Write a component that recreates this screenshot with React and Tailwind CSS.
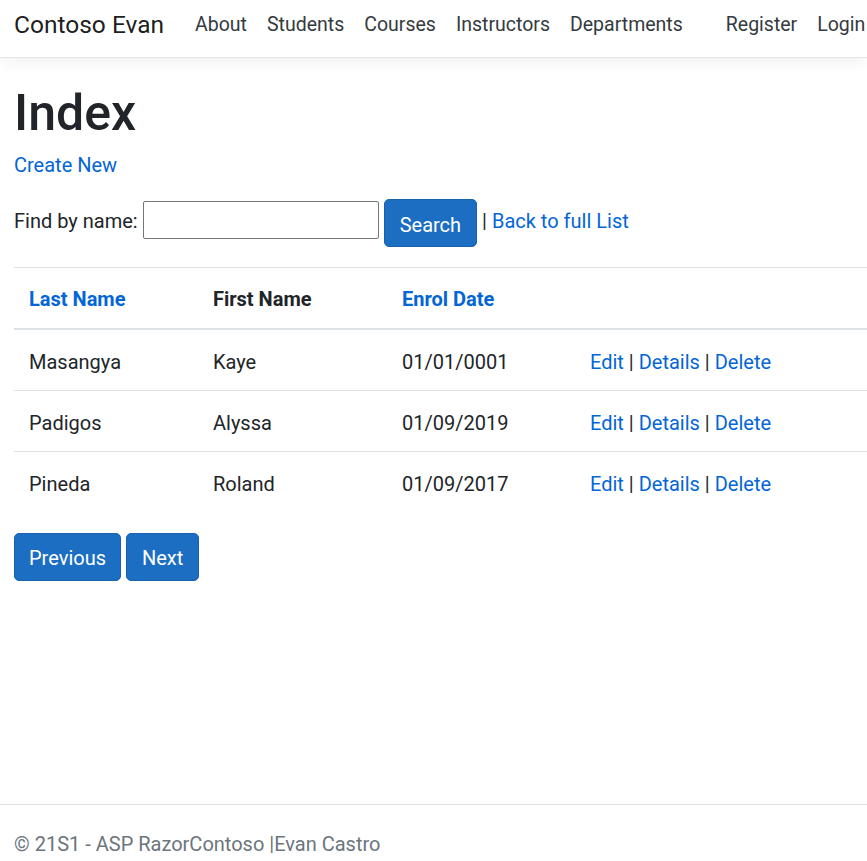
import React from 'react';

const students = [
  { last: 'Masangya', first: 'Kaye', date: '01/01/0001' },
  { last: 'Padigos', first: 'Alyssa', date: '01/09/2019' },
  { last: 'Pineda', first: 'Roland', date: '01/09/2017' },
];

const navLinks = ['About', 'Students', 'Courses', 'Instructors', 'Departments'];

const App = () => {
  return (
    <div className="min-h-[861px] w-full overflow-hidden flex flex-col bg-white text-[20px] leading-[30px] text-[#212529] font-['Segoe_UI',Roboto,'Liberation_Sans',sans-serif]">
      {/* Navbar */}
      <header className="h-[58px] shrink-0 border-b border-[#e5e5e5] bg-white shadow-[0_5px_15px_rgba(0,0,0,0.05)] flex items-center pl-[14px] pb-[8px] whitespace-nowrap">
        <a className="text-[24.5px] text-black/90 mr-[21px]">Contoso Evan</a>
        <ul className="flex text-[19.5px]">
          {navLinks.map((link) => (
            <li key={link}>
              <a className="px-[10px] text-[#343a40]">{link}</a>
            </li>
          ))}
        </ul>
        <ul className="flex ml-[23px] text-[19.5px]">
          <li><a className="px-[10px] text-[#343a40]">Register</a></li>
          <li><a className="px-[10px] text-[#343a40]">Login</a></li>
        </ul>
      </header>

      {/* Main content */}
      <main className="px-[14px] pt-[25px]">
        <h1 className="text-[50px] leading-[60px] font-medium mb-[7px]">Index</h1>
        <p className="mb-[19px]">
          <a className="text-[#0366d6]">Create New</a>
        </p>

        <form className="flex items-center h-[48px] mb-[20px] whitespace-nowrap">
          <span className="mb-[4px]">Find by name:</span>
          <input
            type="text"
            className="ml-[5px] mb-[6px] w-[236px] h-[38px] border border-[#767676] rounded-[2px] bg-white"
          />
          <button
            type="button"
            className="ml-[5px] h-[48px] px-[15px] pt-[3px] bg-[#1b6ec2] border border-[#1861ac] rounded-[5px] text-white"
          >
            Search
          </button>
          <span className="ml-[5px] mb-[4px]">
            | <a className="text-[#0366d6]">Back to full List</a>
          </span>
        </form>

        {/* Table */}
        <table className="w-[1000px] border-collapse mb-[21px]">
          <thead>
            <tr>
              <th className="w-[184px] text-left font-bold px-[15px] pt-[16px] pb-[14px] border-t border-b-2 border-[#dee2e6]">
                <a className="text-[#0366d6]">Last Name</a>
              </th>
              <th className="w-[189px] text-left font-bold px-[15px] pt-[16px] pb-[14px] border-t border-b-2 border-[#dee2e6]">
                First Name
              </th>
              <th className="w-[188px] text-left font-bold px-[15px] pt-[16px] pb-[14px] border-t border-b-2 border-[#dee2e6]">
                <a className="text-[#0366d6]">Enrol Date</a>
              </th>
              <th className="px-[15px] pt-[16px] pb-[14px] border-t border-b-2 border-[#dee2e6]"></th>
            </tr>
          </thead>
          <tbody>
            {students.map((s) => (
              <tr key={s.last}>
                <td className="px-[15px] pt-[17px] pb-[13px] border-t border-[#dee2e6]">{s.last}</td>
                <td className="px-[15px] pt-[17px] pb-[13px] border-t border-[#dee2e6]">{s.first}</td>
                <td className="px-[15px] pt-[17px] pb-[13px] border-t border-[#dee2e6]">{s.date}</td>
                <td className="px-[15px] pt-[17px] pb-[13px] border-t border-[#dee2e6] whitespace-nowrap">
                  <a className="text-[#0366d6]">Edit</a> | <a className="text-[#0366d6]">Details</a> |{' '}
                  <a className="text-[#0366d6]">Delete</a>
                </td>
              </tr>
            ))}
          </tbody>
        </table>

        {/* Paging */}
        <div className="flex gap-[5px]">
          <button className="h-[48px] px-[14px] pt-[2px] bg-[#1b6ec2] border border-[#1861ac] rounded-[5px] text-white">
            Previous
          </button>
          <button className="h-[48px] px-[15px] pt-[2px] bg-[#1b6ec2] border border-[#1861ac] rounded-[5px] text-white">
            Next
          </button>
        </div>
      </main>

      {/* Footer */}
      <footer className="mt-auto h-[57px] shrink-0 border-t border-[#dee2e6] px-[14px] pt-[24px] text-[#6c757d] whitespace-nowrap">
        © 21S1 - ASP RazorContoso |Evan Castro
      </footer>
    </div>
  );
};

export default App;
